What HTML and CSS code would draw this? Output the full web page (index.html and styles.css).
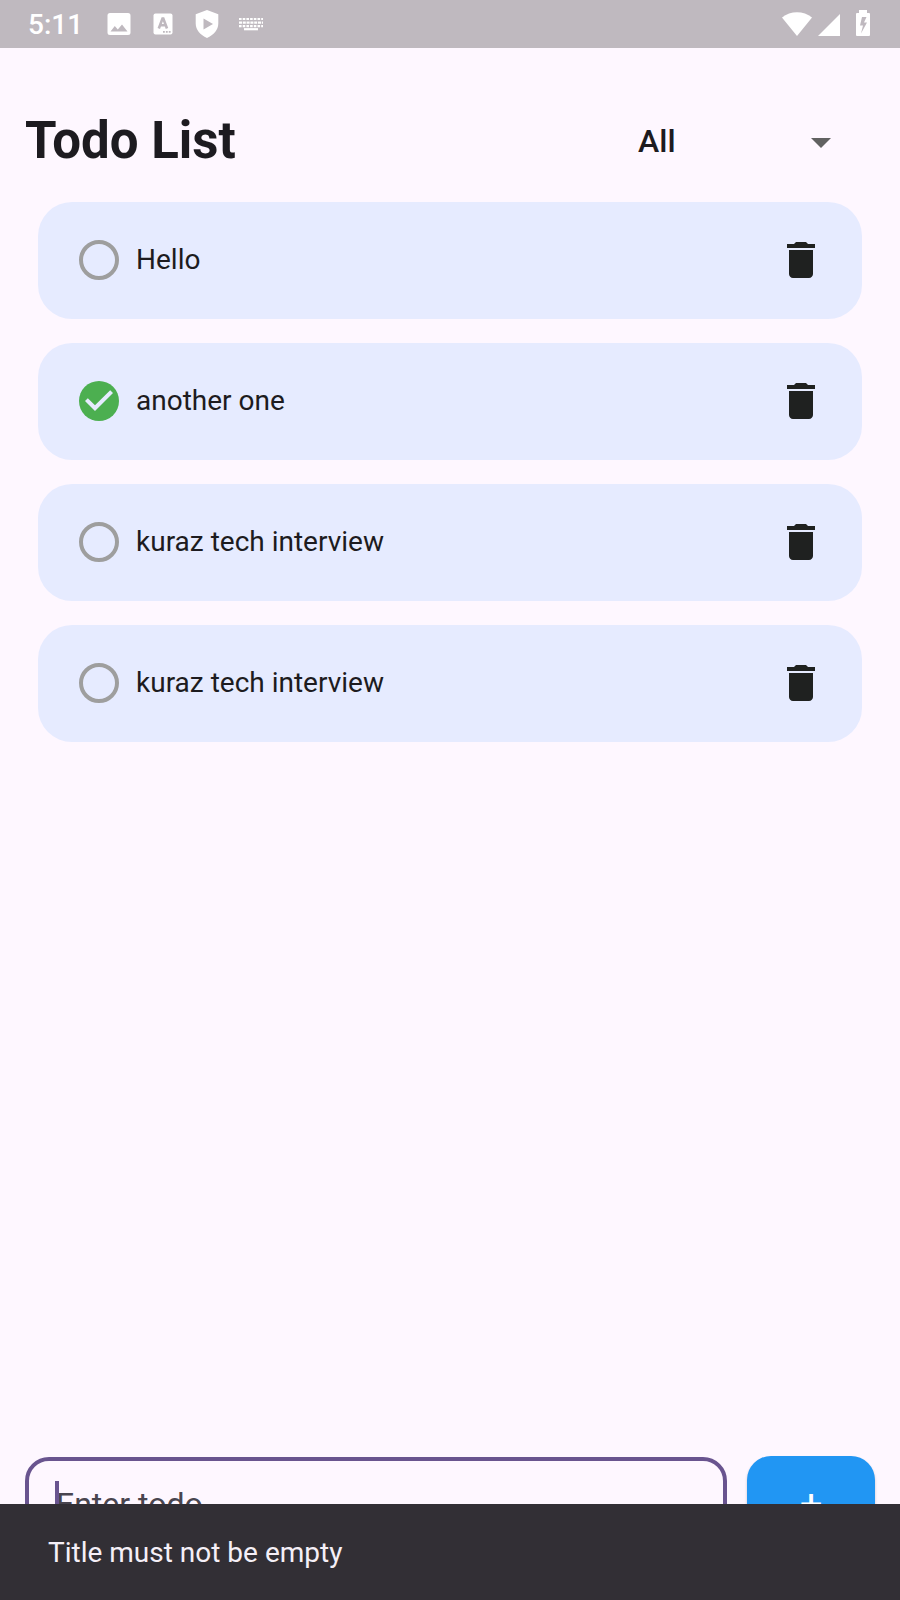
FILE: index.html
```html
<!DOCTYPE html>
<html lang="en">
<head>
<meta charset="utf-8">
<meta name="viewport" content="width=device-width, initial-scale=1">
<title>Todo List</title>
<link rel="stylesheet" href="styles.css">
</head>
<body>
<div class="status-bar">
  <time class="clock">5:11</time>
  <div class="notices">
    <svg class="status-icon" viewBox="0 0 32 32" aria-hidden="true"><path fill-rule="evenodd" d="M7 5h18a2.500 2.500 0 0 1 2.500 2.500v17a2.500 2.500 0 0 1-2.500 2.500H7a2.500 2.500 0 0 1-2.500-2.500v-17A2.500 2.500 0 0 1 7 5zM7.500 23.500h17l-5.500-7-4.200 5-3-3.500z"/></svg>
    <svg class="status-icon" viewBox="0 0 32 32" aria-hidden="true"><path d="M8.500 5.500h15a2 2 0 0 1 2 2v17a2 2 0 0 1-2 2h-15a2 2 0 0 1-2-2v-17a2 2 0 0 1 2-2z"/><path class="cut-line" d="M11.800 20.500l3.700-10h.8l3.700 10M13.200 17.300h5.400"/><path class="cut" d="M16 23h1.800v1.800H16zM18.900 23h1.800v1.800h-1.800zM21.800 23h1.800v1.800h-1.800z"/></svg>
    <svg class="status-icon" viewBox="0 0 32 32" aria-hidden="true"><path fill-rule="evenodd" d="M16 2l11.300 4.200v9.300c0 6-4.500 11.500-11.300 14.500-6.800-3-11.300-8.500-11.300-14.500V6.200zM12.500 10.500v11l9.500-5.500z"/></svg>
    <svg class="status-icon" viewBox="0 0 32 32" aria-hidden="true"><g class="keys"><path stroke-dasharray="2.600 1.100" d="M4 11h24"/><path stroke-dasharray="3 .8" d="M4 14.700h24"/><path stroke-dasharray="2.600 1.100" d="M4 18.200h24"/><path d="M9 21.200h14"/></g></svg>
  </div>
  <div class="signals">
    <svg class="wifi" viewBox="0 0 32 24" aria-hidden="true"><path d="M1 5.500C9.500-1.500 22.500-1.500 31 5.500L16 24z"/></svg>
    <svg class="cell" viewBox="0 0 22 22" aria-hidden="true"><path d="M0 22h22V0z"/></svg>
    <svg class="battery" viewBox="0 0 14 26" aria-hidden="true"><path fill-rule="evenodd" d="M3 0h8v3h2q1 0 1 1v21q0 1-1 1H1q-1 0-1-1V4q0-1 1-1h2zM6 7L4 15.500h3L5 23.500l6-11H8L10.500 7z"/></svg>
  </div>
</div>

<main class="app">
  <header class="header">
    <h1 class="title">Todo List</h1>
    <div class="filter">
      <select class="filter-select" aria-label="Filter todos">
        <option>All</option>
        <option>Completed</option>
        <option>Pending</option>
      </select>
      <svg class="filter-arrow" viewBox="0 0 24 24" aria-hidden="true"><path d="M7 10l5 5 5-5z"/></svg>
    </div>
  </header>

  <ul class="todos">
    <li class="todo">
      <label class="todo-label"><span class="check"><input class="check-input" type="checkbox"><svg class="check-icon" viewBox="2 2 20 20" aria-hidden="true"><path d="M10 17l-5-5 1.410-1.410L10 14.170l7.590-7.590L19 8z"/></svg></span>Hello</label>
      <button class="delete" type="button" aria-label="Delete Hello"><svg class="delete-icon" viewBox="0 0 24 24" aria-hidden="true"><path d="M6 19c0 1.100.9 2 2 2h8c1.100 0 2-.9 2-2V7H6v12zM19 4h-3.500l-1-1h-5l-1 1H5v2h14V4z"/></svg></button>
    </li>
    <li class="todo">
      <label class="todo-label"><span class="check"><input class="check-input" type="checkbox" checked><svg class="check-icon" viewBox="2 2 20 20" aria-hidden="true"><path d="M10 17l-5-5 1.410-1.410L10 14.170l7.590-7.590L19 8z"/></svg></span>another one</label>
      <button class="delete" type="button" aria-label="Delete another one"><svg class="delete-icon" viewBox="0 0 24 24" aria-hidden="true"><path d="M6 19c0 1.100.9 2 2 2h8c1.100 0 2-.9 2-2V7H6v12zM19 4h-3.500l-1-1h-5l-1 1H5v2h14V4z"/></svg></button>
    </li>
    <li class="todo">
      <label class="todo-label"><span class="check"><input class="check-input" type="checkbox"><svg class="check-icon" viewBox="2 2 20 20" aria-hidden="true"><path d="M10 17l-5-5 1.410-1.410L10 14.170l7.590-7.590L19 8z"/></svg></span>kuraz tech interview</label>
      <button class="delete" type="button" aria-label="Delete kuraz tech interview"><svg class="delete-icon" viewBox="0 0 24 24" aria-hidden="true"><path d="M6 19c0 1.100.9 2 2 2h8c1.100 0 2-.9 2-2V7H6v12zM19 4h-3.500l-1-1h-5l-1 1H5v2h14V4z"/></svg></button>
    </li>
    <li class="todo">
      <label class="todo-label"><span class="check"><input class="check-input" type="checkbox"><svg class="check-icon" viewBox="2 2 20 20" aria-hidden="true"><path d="M10 17l-5-5 1.410-1.410L10 14.170l7.590-7.590L19 8z"/></svg></span>kuraz tech interview</label>
      <button class="delete" type="button" aria-label="Delete kuraz tech interview"><svg class="delete-icon" viewBox="0 0 24 24" aria-hidden="true"><path d="M6 19c0 1.100.9 2 2 2h8c1.100 0 2-.9 2-2V7H6v12zM19 4h-3.500l-1-1h-5l-1 1H5v2h14V4z"/></svg></button>
    </li>
  </ul>

  <form class="composer">
    <div class="field">
      <input class="field-input" type="text" placeholder="Enter todo" aria-label="Enter todo">
      <span class="caret"></span>
    </div>
    <button class="add" type="button" aria-label="Add todo">+</button>
  </form>
</main>

<div class="snackbar" role="status">Title must not be empty</div>
</body>
</html>
```

FILE: styles.css
```css
* {
  box-sizing: border-box;
}

body {
  margin: 0;
  min-height: 100vh;
  display: flex;
  flex-direction: column;
  background: #fef7ff;
  color: #1d1b20;
  font-family: Roboto, "Liberation Sans", sans-serif;
  font-size: 28px;
  line-height: 40px;
}

.status-bar {
  display: flex;
  align-items: center;
  height: 48px;
  padding: 0 30px 0 28px;
  background: #bfb9bf;
  color: #fff;
  fill: #fff;
}

.clock {
  font-weight: 500;
  padding-top: 2px;
}

.notices {
  display: flex;
  gap: 12px;
  margin-left: 20px;
}

.status-icon {
  width: 32px;
  height: 32px;
}

.cut {
  fill: #bfb9bf;
}

.cut-line {
  fill: none;
  stroke: #bfb9bf;
  stroke-width: 2.6;
}

.keys {
  fill: none;
  stroke: #fff;
  stroke-width: 2.2;
}

.signals {
  display: flex;
  align-items: flex-end;
  margin-left: auto;
  padding-bottom: 2px;
}

.wifi {
  width: 32px;
  height: 24px;
}

.cell {
  width: 22px;
  height: 22px;
  margin: 0 16px 0 5px;
}

.battery {
  width: 14px;
  height: 26px;
}

.app {
  flex: 1;
  display: flex;
  flex-direction: column;
  padding: 58px 25px 46px;
}

.header {
  display: flex;
  align-items: center;
  justify-content: space-between;
  height: 72px;
}

.title {
  margin: 0;
  padding-bottom: 2px;
  font-size: 51px;
  line-height: 60px;
  font-weight: 700;
}

.filter {
  position: relative;
  width: 237px;
}

.filter-select {
  appearance: none;
  display: block;
  width: 100%;
  height: 48px;
  padding: 0 48px 2px 0;
  border: 0;
  background: none;
  color: inherit;
  font: 500 32px/46px Roboto, "Liberation Sans", sans-serif;
}

.filter-arrow {
  position: absolute;
  top: 0;
  right: 30px;
  width: 48px;
  height: 48px;
  fill: #616161;
  pointer-events: none;
}

.todos {
  display: flex;
  flex-direction: column;
  gap: 24px;
  margin: 24px 13px;
  padding: 0;
  list-style: none;
}

.todo {
  display: flex;
  align-items: center;
  height: 117px;
  padding: 0 37px 1px 41px;
  border-radius: 34px;
  background: #e6ebff;
}

.todo-label {
  flex: 1;
  display: flex;
  align-items: center;
  gap: 17px;
}

.check {
  display: grid;
  width: 40px;
  height: 40px;
}

.check-input,
.check-icon {
  grid-area: 1 / 1;
  width: 40px;
  height: 40px;
  margin: 0;
}

.check-input {
  appearance: none;
  border: 4px solid #9e9e9e;
  border-radius: 50%;
}

.check-input:checked {
  border: 0;
  background: #4caf50;
}

.check-icon {
  display: none;
  fill: #e6ebff;
  pointer-events: none;
}

.check-input:checked + .check-icon {
  display: block;
}

.delete {
  width: 48px;
  height: 48px;
  padding: 0;
  border: 0;
  background: none;
}

.delete-icon {
  display: block;
  width: 48px;
  height: 48px;
  fill: #1f2120;
}

.composer {
  display: flex;
  align-items: center;
  gap: 20px;
  margin-top: auto;
}

.field {
  position: relative;
  flex: 1;
}

.field-input {
  display: block;
  width: 100%;
  height: 96px;
  padding: 0 27px 2px;
  border: 4px solid #69548f;
  border-radius: 24px;
  outline: 0;
  background: none;
  color: inherit;
  font: 400 32px/48px Roboto, "Liberation Sans", sans-serif;
}

.field-input::placeholder {
  color: #49454f;
  opacity: 1;
}

.caret {
  position: absolute;
  top: 24px;
  left: 30px;
  width: 4px;
  height: 48px;
  background: #69548f;
}

.add {
  width: 128px;
  height: 98px;
  padding: 0;
  border: 0;
  border-radius: 24px;
  background: #2196f3;
  box-shadow: 0 2px 3px rgba(0, 0, 0, 0.2);
  color: #fff;
  font: 400 40px/48px Roboto, "Liberation Sans", sans-serif;
}

.snackbar {
  position: fixed;
  right: 0;
  bottom: 0;
  left: 0;
  padding: 29px 48px 27px;
  background: #322f35;
  color: #f5eff7;
}
```
